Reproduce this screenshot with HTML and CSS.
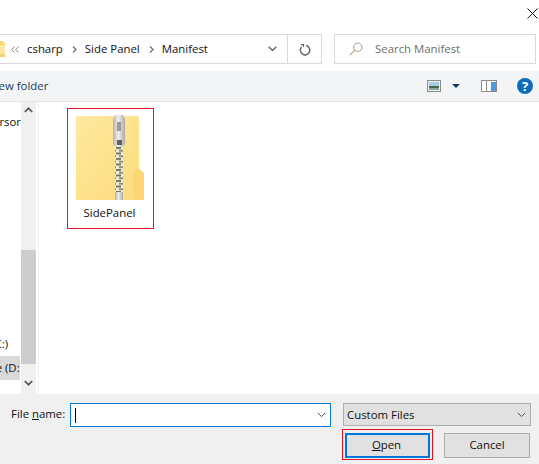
FILE: index.html
```html
<!DOCTYPE html>
<html lang="en">
<head>
    <meta charset="UTF-8">
    <title>Open</title>
    <link rel="stylesheet" href="styles.css">
</head>
<body>

<div class="dialog">
    <div class="titlebar">
        <svg class="close" width="11" height="11" viewBox="0 0 11 11"><path d="M.5.5l10 10M10.5.5l-10 10" stroke="#111" fill="none"/></svg>
    </div>

    <div class="address-row">
        <div class="address">
            <svg class="crumb-folder" width="6" height="16" viewBox="0 0 6 16"><path d="M0 0h3l1 2h1v14H0z" fill="#f6d471"/><path d="M0 4h5v9H0z" fill="#ffe9a3"/></svg>
            <svg class="crumb-more" width="8" height="7" viewBox="0 0 8 7"><path d="M3.5.5L.7 3.5l2.8 3M7.5.5L4.7 3.5l2.8 3" stroke="#8a8a8a" fill="none"/></svg>
            <span class="crumb first">csharp</span>
            <svg class="crumb-sep" width="5" height="7" viewBox="0 0 5 7"><path d="M1 .5l3 3-3 3" stroke="#777" stroke-width="1.4" fill="none"/></svg>
            <span class="crumb">Side Panel</span>
            <svg class="crumb-sep" width="5" height="7" viewBox="0 0 5 7"><path d="M1 .5l3 3-3 3" stroke="#777" stroke-width="1.4" fill="none"/></svg>
            <span class="crumb">Manifest</span>
            <div class="address-end">
                <svg class="address-drop" width="9" height="6" viewBox="0 0 9 6"><path d="M.7.8l3.8 3.8L8.3.8" stroke="#666" stroke-width="1.4" fill="none"/></svg>
                <div class="refresh">
                    <svg width="12" height="13" viewBox="0 0 12 13"><path d="M7.2 2.6A4.7 4.7 0 1 1 2.6 4" stroke="#666" stroke-width="1.5" fill="none"/><path d="M1.5 1h3.6v3.6z" fill="#666"/></svg>
                </div>
            </div>
        </div>
        <div class="search">
            <svg width="14" height="14" viewBox="0 0 14 14"><circle cx="8.8" cy="5.2" r="4.2" stroke="#999" fill="none"/><path d="M5.8 8.2L1 13" stroke="#c9a88a" stroke-width="1.3" fill="none"/></svg>
            <span class="search-text">Search Manifest</span>
        </div>
    </div>

    <div class="toolbar">
        <div class="new-folder">New folder</div>
        <div class="tools">
            <svg class="view-icon" width="14" height="12" viewBox="0 0 14 12"><rect x=".5" y=".5" width="13" height="11" fill="#eef2f5" stroke="#8b8b8b"/><rect x="2" y="2" width="10" height="4" fill="#a9cde0"/><rect x="2" y="6" width="10" height="2" fill="#3f6b4e"/><rect x="2" y="8" width="10" height="2" fill="#8fa69a"/></svg>
            <svg class="view-caret" width="8" height="4" viewBox="0 0 8 4"><path d="M0 0h8L4 4z" fill="#1c3a5e"/></svg>
            <svg class="pane-icon" width="16" height="12" viewBox="0 0 16 12"><rect x=".5" y=".5" width="15" height="11" fill="#fff" stroke="#8b8b8b"/><rect x="5" y="1" width="1" height="10" fill="#8b8b8b"/><rect x="10" y="2" width="5" height="9" fill="#4a9be0"/></svg>
            <div class="help">?</div>
        </div>
    </div>

    <div class="main">
        <div class="nav">
            <div class="nav-item nav-cursor">Cursor</div>
            <div class="nav-item nav-c">Local Disk (C:)</div>
            <div class="nav-item nav-d"><span>Storage (D:)</span></div>
        </div>
        <div class="scrollbar">
            <svg class="arrow-up" width="9" height="6" viewBox="0 0 9 6"><path d="M.8 5L4.5 1.3 8.2 5" stroke="#555" stroke-width="1.7" fill="none"/></svg>
            <div class="thumb"></div>
            <svg class="arrow-down" width="9" height="6" viewBox="0 0 9 6"><path d="M.8 1l3.7 3.7L8.2 1" stroke="#555" stroke-width="1.7" fill="none"/></svg>
        </div>
        <div class="files">
            <div class="tile">
                <svg class="zip-icon" width="68" height="88" viewBox="0 0 68 88">
                    <defs>
                        <linearGradient id="body" x1="0" y1="0" x2="1" y2="1">
                            <stop offset="0" stop-color="#ffe99f"/>
                            <stop offset="1" stop-color="#fcdb7c"/>
                        </linearGradient>
                        <linearGradient id="metal" x1="0" y1="0" x2="1" y2="0">
                            <stop offset="0" stop-color="#b4b4b4"/>
                            <stop offset=".45" stop-color="#eeeeee"/>
                            <stop offset="1" stop-color="#aaaaaa"/>
                        </linearGradient>
                        <pattern id="teeth" width="8" height="5.5" patternUnits="userSpaceOnUse">
                            <rect width="8" height="5.5" fill="#efeee0"/>
                            <rect width="5" height="2" fill="#77745c"/>
                            <rect x="3" y="2.8" width="5" height="2" fill="#8f8c74"/>
                        </pattern>
                    </defs>
                    <path d="M1 2h60a2 2 0 0 1 2 2v82H0V3a1 1 0 0 1 1-1z" fill="url(#body)"/>
                    <path d="M57 60l5-6 6 5v27H57z" fill="#fdd775"/>
                    <rect x="39" y="33" width="8" height="45" fill="url(#teeth)"/>
                    <path d="M37 5l2-4h8l2 4v25l-3 3h-6l-3-3z" fill="url(#metal)"/>
                    <rect x="41" y="8" width="4" height="9" fill="#9b9b9b"/>
                    <rect x="41" y="26" width="5" height="5" fill="#5f5f5f"/>
                    <rect x="39" y="78" width="8" height="8" fill="url(#metal)"/>
                </svg>
                <div class="tile-name">SidePanel</div>
            </div>
        </div>
    </div>

    <div class="bottom">
        <div class="bottom-row">
            <label class="file-label">File <u>n</u>ame:</label>
            <div class="file-input">
                <span class="cursor"></span>
                <svg width="9" height="6" viewBox="0 0 9 6"><path d="M.7.8l3.8 3.8L8.3.8" stroke="#555" fill="none"/></svg>
            </div>
            <div class="file-type">
                <span>Custom Files</span>
                <svg width="9" height="6" viewBox="0 0 9 6"><path d="M.7.8l3.8 3.8L8.3.8" stroke="#555" fill="none"/></svg>
            </div>
        </div>
        <div class="button-row">
            <div class="open-mark"><div class="btn btn-open"><u>O</u>pen</div></div>
            <div class="btn btn-cancel">Cancel</div>
        </div>
    </div>
</div>

</body>
</html>
```

FILE: styles.css
```css
html, body {
    margin: 0;
    height: 100%;
    overflow: hidden;
}
body {
    font-family: "Open Sans", "Noto Sans", sans-serif;
    font-size: 11.4px;
    color: #111;
    background: #fff;
}
.dialog {
    height: 464px;
    display: flex;
    flex-direction: column;
}
.titlebar {
    height: 34px;
    display: flex;
    justify-content: flex-end;
    align-items: flex-start;
    flex: none;
}
.close {
    margin: 8px 1px 0 0;
}

/* address + search */
.address-row {
    height: 30px;
    flex: none;
    display: flex;
    justify-content: space-between;
    padding-right: 3px;
}
.address {
    width: 322px;
    box-sizing: border-box;
    border: 1px solid #d9d9d9;
    border-left: none;
    display: flex;
    align-items: center;
}
.crumb-more {
    margin-left: 5px;
    margin-right: 8px;
}
.crumb-sep {
    margin: 1px 8px 0 9px;
}
.crumb {
    white-space: nowrap;
    margin-bottom: 2px;
}
.address-end {
    margin-left: auto;
    display: flex;
    align-items: center;
    height: 100%;
}
.address-drop {
    margin-right: 10px;
}
.refresh {
    width: 33px;
    height: 100%;
    border-left: 1px solid #d9d9d9;
    display: flex;
    align-items: center;
    justify-content: center;
}
.search {
    width: 202px;
    box-sizing: border-box;
    border: 1px solid #d9d9d9;
    display: flex;
    align-items: center;
    gap: 12px;
    padding-left: 14px;
    color: #6d6d6d;
}
.search-text {
    margin-bottom: 2px;
}

/* toolbar */
.toolbar {
    margin-top: 7px;
    height: 31px;
    flex: none;
    box-sizing: border-box;
    background: #f3f4f6;
    border-bottom: 1px solid #e6e6e6;
    display: flex;
    align-items: center;
    justify-content: space-between;
    overflow: hidden;
}
.new-folder {
    margin: 0 0 2px -10px;
    color: #1c3a5e;
}
.tools {
    display: flex;
    align-items: center;
    padding-right: 6px;
}
.view-caret {
    margin-left: 11px;
}
.pane-icon {
    margin-left: 21px;
}
.help {
    margin-left: 20px;
    width: 16px;
    height: 16px;
    border-radius: 50%;
    background: #0f6cbd;
    color: #fff;
    font-weight: bold;
    font-size: 13px;
    line-height: 16px;
    text-align: center;
}

/* nav + file list */
.main {
    flex: 1;
    display: flex;
    min-height: 0;
}
.nav {
    width: 21px;
    flex: none;
    display: flex;
    flex-direction: column;
    align-items: flex-end;
    overflow: hidden;
}
.nav-item {
    white-space: nowrap;
    height: 24px;
    line-height: 24px;
}
.nav-cursor {
    margin-top: 8px;
}
.nav-c {
    margin-top: 198px;
    margin-right: 13px;
}
.nav-d {
    margin-right: 1px;
    width: 20px;
    background: #d9d9d9;
    display: flex;
    justify-content: flex-end;
    overflow: hidden;
}
.nav-d span {
    flex: none;
    margin-right: -3px;
}
.scrollbar {
    width: 15px;
    flex: none;
    background: #f0f0f0;
    display: flex;
    flex-direction: column;
    align-items: center;
}
.arrow-up {
    margin-top: 5px;
}
.thumb {
    margin-top: 137px;
    width: 100%;
    height: 114px;
    background: #cdcdcd;
}
.arrow-down {
    margin-top: 16px;
}
.files {
    flex: 1;
    margin-left: 2px;
    border-left: 1px solid #f0f0f0;
    padding: 6px 0 0 28px;
}
.tile {
    width: 87px;
    height: 121px;
    box-sizing: border-box;
    border: 1px solid #e81123;
    padding-top: 5px;
    display: flex;
    flex-direction: column;
    align-items: center;
}
.zip-icon {
    margin-right: 1px;
}
.tile-name {
    margin: 3px 2px 0 0;
}

/* bottom */
.bottom {
    height: 70px;
    flex: none;
    background: #f0f0f0;
    padding-top: 9px;
    box-sizing: border-box;
}
.bottom-row {
    display: flex;
    align-items: flex-start;
}
.file-label {
    margin: 3px 0 0 11px;
    width: 59px;
}
.file-input {
    width: 261px;
    height: 24px;
    box-sizing: border-box;
    background: #fff;
    border: 1px solid #0078d7;
    display: flex;
    align-items: center;
    justify-content: space-between;
    padding: 0 4px;
}
.cursor {
    width: 1px;
    height: 15px;
    background: #000;
}
.file-type {
    margin-left: 12px;
    width: 188px;
    height: 23px;
    box-sizing: border-box;
    background: #e1e1e1;
    border: 1px solid #adadad;
    display: flex;
    align-items: center;
    justify-content: space-between;
    padding: 0 4px 0 3px;
}
.button-row {
    display: flex;
    align-items: flex-start;
    margin: 2px 0 0 342px;
    gap: 11px;
}
.open-mark {
    width: 91px;
    height: 31px;
    box-sizing: border-box;
    border: 1px solid #e81123;
    padding: 3px 2px;
}
.btn {
    width: 86px;
    height: 25px;
    box-sizing: border-box;
    background: #e1e1e1;
    border: 1px solid #adadad;
    text-align: center;
    line-height: 21px;
}
.btn-open {
    width: 85px;
    border: 2px solid #0078d7;
    line-height: 19px;
    padding-right: 2px;
}
.btn-cancel {
    margin-top: 4px;
}
```
